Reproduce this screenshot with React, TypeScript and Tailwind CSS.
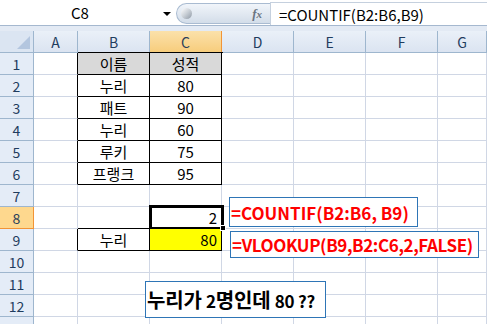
import React from "react";

const FONT = { fontFamily: '"Noto Sans CJK KR", "Noto Sans", "Liberation Sans", sans-serif' };

type Cell = { t?: string; align?: "c" | "r"; bg?: string; rb?: boolean; bb?: boolean };

const cols = ["A", "B", "C", "D", "E", "F", "G"];

function rowData(r: number): Cell[] {
  const base: Cell[] = Array.from({ length: 7 }, () => ({}));
  const tbl: Record<number, [string, string]> = {
    1: ["이름", "성적"],
    2: ["누리", "80"],
    3: ["패트", "90"],
    4: ["누리", "60"],
    5: ["루키", "75"],
    6: ["프랭크", "95"],
  };
  if (tbl[r]) {
    base[0].rb = true;
    base[1] = { t: tbl[r][0], align: "c", rb: true, bb: true, bg: r === 1 ? "bg-[#d9d9d9]" : undefined };
    base[2] = { t: tbl[r][1], align: "c", rb: true, bb: true, bg: r === 1 ? "bg-[#d9d9d9]" : undefined };
  }
  if (r === 8) {
    base[1].bb = true;
    base[2] = { t: "2", align: "r", bb: true };
  }
  if (r === 9) {
    base[0].rb = true;
    base[1] = { t: "누리", align: "c", rb: true, bb: true };
    base[2] = { t: "80", align: "r", rb: true, bb: true, bg: "bg-[#ffff00]" };
  }
  return base;
}

export default function App() {
  const rows = Array.from({ length: 13 }, (_, i) => i + 1);
  return (
    <div className="relative w-[487px] h-[324px] overflow-hidden bg-white" style={FONT}>
      {/* formula bar */}
      <div className="flex h-[26px] border-b border-[#a5b8cf]">
        <div className="relative w-[176px] bg-white flex items-center">
          <div className="w-[160px] text-center text-[15px] text-black leading-none">C8</div>
          <div className="absolute left-[163px] top-[12px] w-0 h-0 border-l-[4px] border-r-[4px] border-t-[4px] border-l-transparent border-r-transparent border-t-black" />
        </div>
        <div className="mt-[3px] mb-[1px] w-[94px] rounded-l-[12px] border border-r-0 border-[#a9bbd1] bg-gradient-to-b from-[#f1f5fa] to-[#d3dde9] flex items-center">
          <div className="ml-[4px] w-[11px] h-[11px] rounded-full bg-gradient-to-br from-[#ffffff] via-[#c9cfd6] to-[#8e98a4]" />
          <div className="flex-1" />
          <span className="mr-[8px] text-[13px] italic font-bold text-[#6a7481]" style={{ fontFamily: '"Liberation Serif", serif' }}>
            f<span className="text-[11px]">x</span>
          </span>
        </div>
        <div className="flex-1 mt-[2px] border-t border-l border-[#c5d0de] bg-white flex items-center pl-[8px]">
          <span className="text-[15px] text-black leading-none">=COUNTIF(B2:B6,B9)</span>
        </div>
      </div>
      <div className="h-[5px] bg-[#e3eaf4]" />

      {/* grid */}
      <div className="grid grid-cols-[34px_44px_72px_72px_72px_72px_72px_49px] auto-rows-[22px]">
        {/* corner */}
        <div className="flex items-end justify-end pr-[3px] pb-[3px] border-r border-b border-[#9eb6ce] bg-[#dbe5f2]">
          <svg width="13" height="13" viewBox="0 0 13 13">
            <polygon points="13,0 13,13 0,13" fill="#b3c6df" />
          </svg>
        </div>
        {cols.map((c) => (
          <div
            key={c}
            className={
              "flex items-center justify-center text-[14px] leading-none border-r border-b " +
              (c === "C"
                ? "bg-gradient-to-b from-[#fbe1aa] to-[#f7cd7c] border-[#f29436] text-[#2c3f5a]"
                : "bg-gradient-to-b from-[#eaf0f8] to-[#dbe4f1] border-[#9eb6ce] text-[#1f3c5e]")
            }
          >
            {c}
          </div>
        ))}
        {rows.map((r) => (
          <React.Fragment key={r}>
            <div
              className={
                "flex items-center justify-center text-[14px] leading-none border-r border-b " +
                (r === 8
                  ? "bg-[#fed88e] border-[#f29436] text-[#2c3f5a]"
                  : "bg-[#e4ecf7] border-[#9eb6ce] text-[#1f3c5e]")
              }
            >
              {r}
            </div>
            {rowData(r).map((cell, i) => (
              <div
                key={i}
                className={
                  "flex items-center text-[15px] text-black leading-none border-r border-b " +
                  (cell.rb ? "border-r-black " : "border-r-[#d0d7e5] ") +
                  (cell.bb ? "border-b-black " : "border-b-[#d0d7e5] ") +
                  (cell.align === "c" ? "justify-center " : cell.align === "r" ? "justify-end pr-[4px] " : "") +
                  (cell.bg ?? "bg-white")
                }
              >
                {cell.t}
              </div>
            ))}
          </React.Fragment>
        ))}
      </div>

      {/* table top edge */}
      <div className="absolute left-[78px] top-[52px] w-[145px] h-px bg-black" />

      {/* selection C8 */}
      <div className="absolute left-[149px] top-[205px] w-[75px] h-[24px] border-[3px] border-b-2 border-black" />
      <div className="absolute left-[220px] top-[225px] w-[6px] h-[6px] bg-black border border-white" />

      {/* annotation boxes */}
      <div className="absolute left-[229px] top-[197px] w-[189px] h-[30px] border border-[#2e75b6] bg-white flex items-center pl-[1px]">
        <span className="text-[17px] font-bold text-[#ff0000] leading-none">=COUNTIF(B2:B6, B9)</span>
      </div>
      <div className="absolute left-[230px] top-[231px] w-[249px] h-[27px] border border-[#2e75b6] bg-white flex items-center pl-[1px]">
        <span className="text-[17px] font-bold text-[#ff0000] leading-none tracking-[-0.4px]">=VLOOKUP(B9,B2:C6,2,FALSE)</span>
      </div>
      <div className="absolute left-[145px] top-[281px] w-[181px] h-[37px] border border-[#2e75b6] bg-white flex items-center pl-[1px]">
        <span className="text-[20px] font-bold text-black leading-none tracking-[-0.2px]">
          누리가 <span className="text-[17px]">2</span>명인데 <span className="text-[17px]">80 ??</span>
        </span>
      </div>
    </div>
  );
}
